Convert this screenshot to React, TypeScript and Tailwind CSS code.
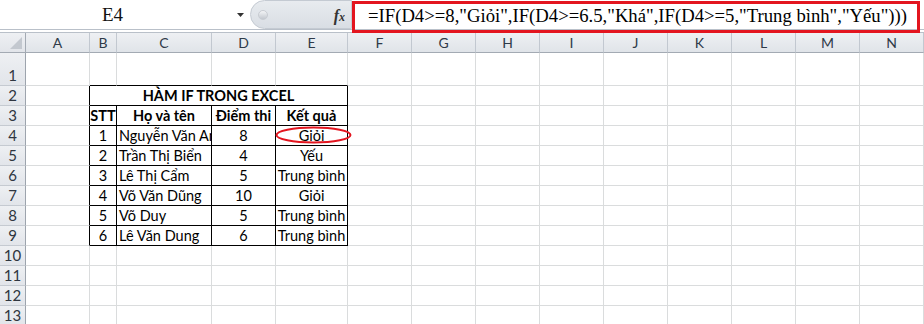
import React from "react";

type Col = { key: string; w: string };

const cols: Col[] = [
  { key: "A", w: "w-[64px]" },
  { key: "B", w: "w-[27px]" },
  { key: "C", w: "w-[95px]" },
  { key: "D", w: "w-[64px]" },
  { key: "E", w: "w-[72px]" },
  { key: "F", w: "w-[64px]" },
  { key: "G", w: "w-[64px]" },
  { key: "H", w: "w-[64px]" },
  { key: "I", w: "w-[64px]" },
  { key: "J", w: "w-[64px]" },
  { key: "K", w: "w-[64px]" },
  { key: "L", w: "w-[64px]" },
  { key: "M", w: "w-[64px]" },
  { key: "N", w: "w-[64px]" },
];

const rest = cols.slice(5);

const students = [
  { stt: "1", name: "Nguyễn Văn An", diem: "8", kq: "Giỏi" },
  { stt: "2", name: "Trần Thị Biển", diem: "4", kq: "Yếu" },
  { stt: "3", name: "Lê Thị Cẩm", diem: "5", kq: "Trung bình" },
  { stt: "4", name: "Võ Văn Dũng", diem: "10", kq: "Giỏi" },
  { stt: "5", name: "Võ Duy", diem: "5", kq: "Trung bình" },
  { stt: "6", name: "Lê Văn Dung", diem: "6", kq: "Trung bình" },
];

const grid = "border-r border-b border-[#dadcdd]";
const blk = "border-r border-b border-black";

// row number on the left
function RowHead({ n }: { n: number }) {
  return (
    <div className="w-[26px] shrink-0 flex items-end justify-center pb-[1px] bg-gradient-to-b from-[#eef0f3] to-[#e2e5ea] border-r border-b border-r-[#9da4ad] border-b-[#c5cad1] text-[15px] leading-[17px] text-[#2f3640]">
      {n}
    </div>
  );
}

function EmptyCells({ list }: { list: Col[] }) {
  return (
    <>
      {list.map((c) => (
        <div key={c.key} className={`${c.w} shrink-0 ${grid}`} />
      ))}
    </>
  );
}

export default function App() {
  return (
    <div className="relative w-[924px] h-[324px] overflow-hidden bg-white font-['Lato','Liberation_Sans',sans-serif] text-[14.5px] text-black">
      {/* formula bar */}
      <div className="flex h-[29px]">
        <div className="w-[250px] shrink-0 flex items-center bg-white">
          <span className="flex-1 text-center pr-[12px] font-['Liberation_Serif',serif] text-[19px] leading-none text-[#111]">
            E4
          </span>
          <svg width="7" height="4" viewBox="0 0 7 4" className="mr-[6px] mt-[1px]">
            <path d="M0 0h7L3.5 4z" fill="#333" />
          </svg>
        </div>
        <div className="w-[102px] shrink-0 flex items-center justify-between rounded-l-[15px] border border-[#c4cad2] bg-gradient-to-b from-[#e8ebef] to-[#d9dee4] pl-[7px] pr-[6px]">
          <div className="w-[10px] h-[10px] rounded-full bg-gradient-to-b from-[#f4f5f7] to-[#c3c8cf] border border-[#c8ccd2]" />
          <span className="font-['Liberation_Serif',serif] italic font-bold text-[16px] leading-none text-[#333] mt-[2px]">
            f<span className="text-[12px]">x</span>
          </span>
        </div>
        <div className="flex-1 flex items-center pl-[16px] bg-white">
          <span className="font-['Liberation_Serif',serif] text-[18.7px] leading-none whitespace-nowrap pt-[3px]">
            =IF(D4&gt;=8,"Giỏi",IF(D4&gt;=6.5,"Khá",IF(D4&gt;=5,"Trung bình","Yếu")))
          </span>
        </div>
      </div>
      <div className="h-[4px] border-y border-[#b9c0c9] bg-white" />

      {/* red highlight around formula */}
      <div className="absolute left-[352px] top-[1px] w-[568px] h-[32px] border-[3px] border-[#e3151f]" />

      {/* column headers */}
      <div className="flex h-[20px]">
        <div className="w-[26px] shrink-0 relative bg-gradient-to-b from-[#eef0f3] to-[#e2e5ea] border-r border-b border-[#a3aab3]">
          <svg width="12" height="12" viewBox="0 0 12 12" className="absolute right-[3px] bottom-[3px]">
            <path d="M12 0V12H0z" fill="#c3c8cf" />
          </svg>
        </div>
        {cols.map((c) => (
          <div
            key={c.key}
            className={`${c.w} shrink-0 flex items-center justify-center bg-gradient-to-b from-[#eef0f3] to-[#e0e4e9] border-r border-b border-r-[#c2c8d0] border-b-[#a3aab3] text-[14px] text-[#2f3a48]`}
          >
            {c.key}
          </div>
        ))}
      </div>

      {/* row 1 */}
      <div className="flex h-[33px]">
        <RowHead n={1} />
        <div className={`w-[64px] shrink-0 ${grid}`} />
        <div className="w-[27px] shrink-0 border-r border-[#dadcdd] border-b border-b-black" />
        <div className="w-[95px] shrink-0 border-r border-[#dadcdd] border-b border-b-black" />
        <div className="w-[64px] shrink-0 border-r border-[#dadcdd] border-b border-b-black" />
        <div className="w-[72px] shrink-0 border-r border-[#dadcdd] border-b border-b-black" />
        <EmptyCells list={rest} />
      </div>

      {/* row 2 - title */}
      <div className="flex h-[20px]">
        <RowHead n={2} />
        <div className="w-[64px] shrink-0 border-r border-r-black border-b border-b-[#dadcdd]" />
        <div className={`w-[258px] shrink-0 ${blk} flex items-center justify-center font-bold`}>
          HÀM IF TRONG EXCEL
        </div>
        <EmptyCells list={rest} />
      </div>

      {/* row 3 - headers */}
      <div className="flex h-[20px]">
        <RowHead n={3} />
        <div className="w-[64px] shrink-0 border-r border-r-black border-b border-b-[#dadcdd]" />
        <div className={`w-[27px] shrink-0 ${blk} flex items-center justify-center font-bold`}>STT</div>
        <div className={`w-[95px] shrink-0 ${blk} flex items-center justify-center font-bold`}>Họ và tên</div>
        <div className={`w-[64px] shrink-0 ${blk} flex items-center justify-center font-bold`}>Điểm thi</div>
        <div className={`w-[72px] shrink-0 ${blk} flex items-center justify-center font-bold`}>Kết quả</div>
        <EmptyCells list={rest} />
      </div>

      {/* data rows */}
      {students.map((s, i) => (
        <div key={s.stt} className="flex h-[20px]">
          <RowHead n={i + 4} />
          <div className="w-[64px] shrink-0 border-r border-r-black border-b border-b-[#dadcdd]" />
          <div className={`w-[27px] shrink-0 ${blk} flex items-center justify-center`}>{s.stt}</div>
          <div className={`w-[95px] shrink-0 ${blk} flex items-center pl-[2px] whitespace-nowrap overflow-hidden`}>
            {s.name}
          </div>
          <div className={`w-[64px] shrink-0 ${blk} flex items-center justify-center`}>{s.diem}</div>
          <div className={`relative w-[72px] shrink-0 ${blk} flex items-center justify-center whitespace-nowrap`}>
            {s.kq}
            {i === 0 && (
              <svg width="80" height="20" viewBox="0 0 80 20" className="absolute left-[-2px] top-0 overflow-visible">
                <ellipse cx="39.5" cy="9" rx="37" ry="7.5" fill="none" stroke="#e3151f" strokeWidth="2" />
              </svg>
            )}
          </div>
          <EmptyCells list={rest} />
        </div>
      ))}

      {/* rows 10 - 13 */}
      {[10, 11, 12, 13].map((n) => (
        <div key={n} className="flex h-[20px]">
          <RowHead n={n} />
          <EmptyCells list={cols} />
        </div>
      ))}
    </div>
  );
}
